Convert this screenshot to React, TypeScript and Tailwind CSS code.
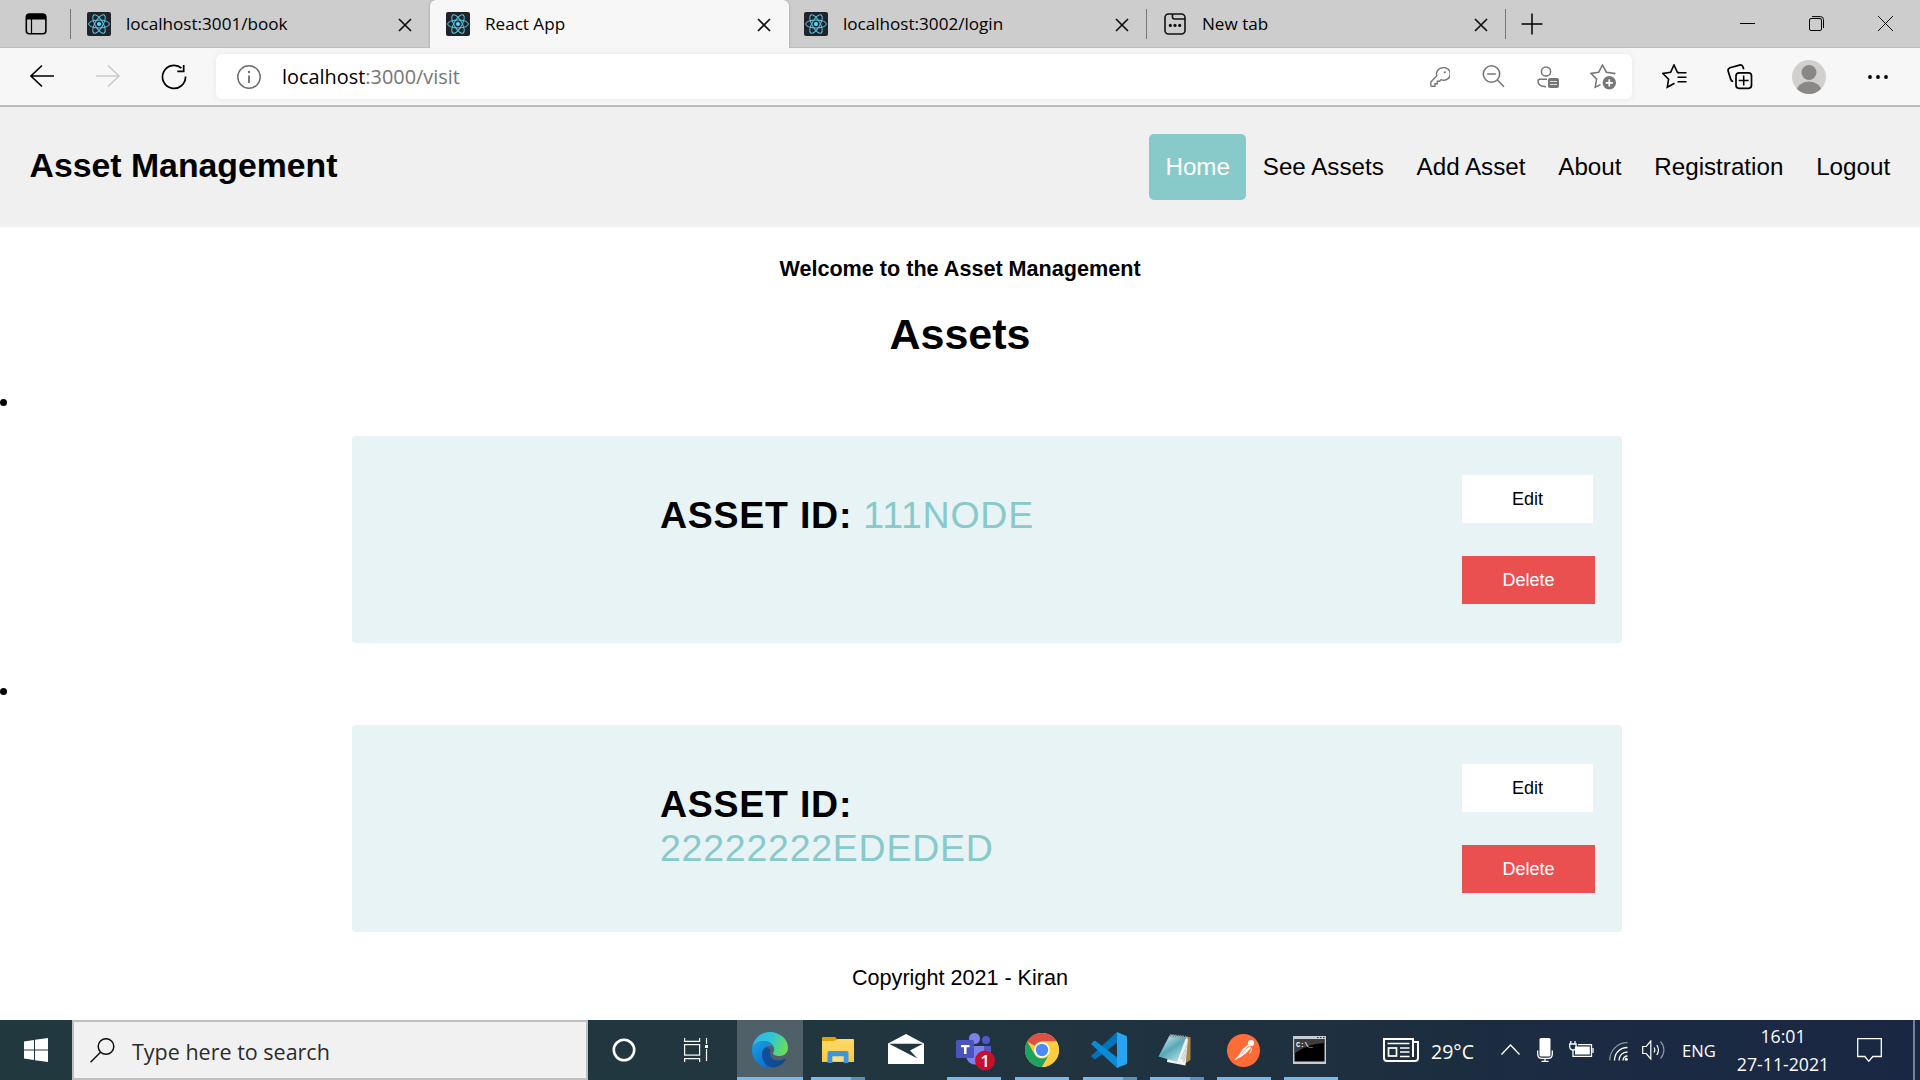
import React from "react";

const ReactLogo = () => (
  <svg width="24" height="24" viewBox="0 0 24 24" className="shrink-0">
    <rect width="24" height="24" rx="2" fill="#20232a" />
    <g fill="none" stroke="#5ccfee" strokeWidth="0.95">
      <ellipse cx="12" cy="12" rx="10.4" ry="4" />
      <ellipse cx="12" cy="12" rx="10.4" ry="4" transform="rotate(60 12 12)" />
      <ellipse cx="12" cy="12" rx="10.4" ry="4" transform="rotate(120 12 12)" />
    </g>
    <circle cx="12" cy="12" r="2" fill="#61dafb" />
  </svg>
);

const CloseX = () => (
  <svg width="14" height="14" viewBox="0 0 14 14" className="mt-[2px] shrink-0" stroke="#111" strokeWidth="1.7">
    <path d="M1 1l12 12M13 1L1 13" />
  </svg>
);

const NewTabIcon = () => (
  <svg width="24" height="24" viewBox="0 0 24 24" className="shrink-0" fill="none" stroke="#111" strokeWidth="1.6">
    <rect x="2" y="2" width="20" height="20" rx="3.5" />
    <path d="M9.5 2v3a2 2 0 0 0 2 2H22" />
    <g fill="#111" stroke="none">
      <circle cx="7.3" cy="13.4" r="1.6" />
      <circle cx="12" cy="13.4" r="1.6" />
      <circle cx="16.7" cy="13.4" r="1.6" />
    </g>
  </svg>
);

function Tab({ icon, title }: { icon: React.ReactNode; title: string }) {
  return (
    <div className="flex h-full w-[358px] items-center pl-4 pr-[17px]">
      {icon}
      <span className="ml-[15px] flex-1 text-[17.1px] leading-6">{title}</span>
      <CloseX />
    </div>
  );
}

const Divider = () => <div className="h-[30px] w-px bg-[#777]" />;

function TabStrip() {
  return (
    <div className="flex h-12 items-center border-b border-[#bdbdbd] bg-[#cdcdcd] text-black">
      <svg width="24" height="24" viewBox="0 0 24 24" className="ml-6 mr-[22px] shrink-0" fill="none" stroke="#000">
        <rect x="2.3" y="2.3" width="19.6" height="19.4" rx="3" strokeWidth="1.6" />
        <path d="M2 5a3 3 0 0 1 3-3.5h14a3 3 0 0 1 3 3.5v2.5H2z" fill="#000" stroke="none" />
        <path d="M7.5 7v15" strokeWidth="1.2" />
      </svg>
      <Divider />
      <Tab icon={<ReactLogo />} title="localhost:3001/book" />
      <div className="ml-px mt-px h-12 w-[359px] rounded-t-md bg-[#f7f7f7] shadow-[0_0_3px_rgba(0,0,0,0.25)] [clip-path:inset(-4px_-4px_0_-4px)]">
        <Tab icon={<ReactLogo />} title="React App" />
      </div>
      <div className="-ml-px flex h-full w-[358px]">
        <Tab icon={<ReactLogo />} title="localhost:3002/login" />
      </div>
      <Divider />
      <Tab icon={<NewTabIcon />} title="New tab" />
      <Divider />
      <svg width="22" height="22" viewBox="0 0 22 22" className="ml-[15px]" stroke="#000" strokeWidth="1.5">
        <path d="M11 0.5v21M0.5 11h21" />
      </svg>
      <div className="ml-auto mr-[27px] flex items-center gap-[54px]">
        <svg width="15" height="15" viewBox="0 0 15 15" stroke="#000"><path d="M0 7.5h15" /></svg>
        <svg width="15" height="15" viewBox="0 0 15 15" fill="none" stroke="#000">
          <rect x="0.5" y="2.5" width="12" height="12" rx="1.5" />
          <path d="M3 0.6h8.5a3 3 0 0 1 3 3V12" />
        </svg>
        <svg width="15" height="15" viewBox="0 0 15 15" stroke="#000"><path d="M0 0l15 15M15 0L0 15" /></svg>
      </div>
    </div>
  );
}

function Toolbar() {
  return (
    <div className="flex h-[59px] items-center border-b-2 border-[#bdbdbd] bg-[#f7f7f7]">
      <svg width="24" height="24" viewBox="0 0 24 24" className="ml-[30px] -mt-px" fill="none" stroke="#000" strokeWidth="1.6">
        <path d="M24 12H1M12 1.5L1 12l11 10.5" />
      </svg>
      <svg width="24" height="24" viewBox="0 0 24 24" className="ml-[42px] -mt-px" fill="none" stroke="#cbcbcb" strokeWidth="1.6">
        <path d="M0 12h23M12 1.5L23 12 12 22.5" />
      </svg>
      <svg width="26" height="26" viewBox="0 0 26 26" className="ml-[41px]" fill="none" stroke="#000" strokeWidth="1.7">
        <path d="M24.5 12.5A11.5 11.5 0 1 1 20.5 4.2" />
        <path d="M22.7 1v6.3h-6.4" />
      </svg>
      <div className="ml-[29px] flex h-[45px] w-[1416px] items-center rounded-md bg-white shadow-[0_0_6px_rgba(0,0,0,0.08)]">
        <svg width="24" height="24" viewBox="0 0 24 24" className="ml-[21px]" fill="none" stroke="#6b6b6b" strokeWidth="1.4">
          <circle cx="12" cy="12" r="11.2" />
          <path d="M12 10.5v7.5" strokeWidth="1.8" />
          <circle cx="12" cy="7" r="1.2" fill="#6b6b6b" stroke="none" />
        </svg>
        <span className="ml-[21px] flex-1 text-[19.9px] leading-7 text-black">
          localhost<span className="text-[#767676]">:3000/visit</span>
        </span>
        <svg width="20" height="20" viewBox="0 0 20 20" className="mr-[32px]" fill="none" stroke="#767676" strokeWidth="1.4">
          <path d="M12.8 0.7a6.3 6.3 0 0 0-6 8.1L0.8 15v3.3c0 .6.4 1 1 1h3.2v-2.6h2.3v-2.4h2.2l1.7-1.7a6.3 6.3 0 1 0 1.6-11.9z" />
          <circle cx="14.8" cy="5.3" r="1.1" fill="#767676" stroke="none" />
        </svg>
        <svg width="23" height="23" viewBox="0 0 23 23" className="mr-[32px]" fill="none" stroke="#767676" strokeWidth="1.6">
          <circle cx="9.5" cy="9" r="8.2" />
          <path d="M5.2 9h8.6M15.4 15l6.6 6.8" />
        </svg>
        <svg width="23" height="23" viewBox="0 0 23 23" className="mr-[30px] mt-0.5" fill="none" stroke="#767676" strokeWidth="1.5">
          <circle cx="9" cy="5.5" r="4.6" />
          <path d="M10 13.2H3a2 2 0 0 0-2 2c0 3 3 5.3 8 5.5" />
          <rect x="11" y="12" width="11" height="10" rx="2" fill="#767676" stroke="none" />
          <path d="M13 15.5h7M13 18.5h7" stroke="#ddd" strokeWidth="1.1" />
        </svg>
        <svg width="27" height="26" viewBox="0 0 27 26" className="mr-[15px]" fill="none" stroke="#767676" strokeWidth="1.5">
          <path d="M24.2 10.5l.5-1.1-8.3-1.2L12.5 1 8.7 8.2.9 9.4l5.7 5.7-1.4 8 5.3-2.5" />
          <circle cx="19.3" cy="18.8" r="6.7" fill="#767676" stroke="none" />
          <path d="M19.3 15.2v7.2M15.7 18.8h7.2" stroke="#fff" strokeWidth="1.7" />
        </svg>
      </div>
      <svg width="25" height="25" viewBox="0 0 25 25" className="ml-[30px]" fill="none" stroke="#000" strokeWidth="1.6">
        <path d="M17 8.6l-1.6-.3L12 1 8.6 8.3.9 9.5l5.7 5.7-1.3 8 7.2-3.9" />
        <path d="M15.5 8.8h9M15.5 13.3h9M15.5 17.8h9" strokeWidth="1.5" />
      </svg>
      <svg width="26" height="26" viewBox="0 0 26 26" className="ml-[40px]" fill="none" stroke="#000" strokeWidth="1.7">
        <path d="M6.2 17.5c-1.7-.3-2.2-1-2.5-2.2L1.2 7.2C.7 5.5 1.5 4.3 3 3.8l9.5-2.7c1.7-.5 3 .3 3.5 2l.7 2.2" />
        <rect x="9" y="8.8" width="15.5" height="15.5" rx="3" />
        <path d="M16.7 11.5v10M11.7 16.5h10" strokeWidth="1.5" />
      </svg>
      <svg width="34" height="34" viewBox="0 0 34 34" className="ml-[39px] mt-px">
        <defs><clipPath id="avatar"><circle cx="17" cy="17" r="17" /></clipPath></defs>
        <g clipPath="url(#avatar)">
          <rect width="34" height="34" fill="#d2d0ce" />
          <circle cx="17" cy="12.5" r="7.5" fill="#8a8886" />
          <ellipse cx="17" cy="31.5" rx="12.5" ry="10" fill="#8a8886" />
        </g>
      </svg>
      <svg width="20" height="6" viewBox="0 0 20 6" className="ml-[42px]">
        <circle cx="2" cy="3" r="1.9" /><circle cx="10" cy="3" r="1.9" /><circle cx="18" cy="3" r="1.9" />
      </svg>
    </div>
  );
}

const links = ["Home", "See Assets", "Add Asset", "About", "Registration", "Logout"];

function SiteHeader() {
  return (
    <header className="flex h-[120px] items-center justify-between bg-[#f0f0f0] pl-[29.5px] pr-[13.5px] text-black">
      <h1 className="-mt-[4px] text-[33.8px] font-bold leading-10">Asset Management</h1>
      <nav className="flex text-[24.2px]">
        {links.map((l, i) => (
          <a key={l} className={i === 0 ? "flex h-[66px] items-center rounded-[5px] bg-[#88c9ca] px-[16.4px] text-white" : "flex h-[66px] items-center rounded-[5px] px-[16.4px]"}>
            {l}
          </a>
        ))}
      </nav>
    </header>
  );
}

function AssetItem({ id }: { id: string }) {
  return (
    <li className="h-[289px]">
      <div className="h-[7px] w-[7px] rounded-full bg-black" />
      <div className="ml-[352px] mt-[30px] flex h-[207px] w-[1270px] justify-between rounded-[4px] bg-[#e7f3f5]">
        <h2 className="ml-[308px] mt-[58.4px] w-[450px] text-[37.5px] font-bold leading-[43.2px] tracking-[0.75px] text-black">
          ASSET ID:{" "}<span className="ml-px font-normal text-[#88c9ca] first:ml-0">{id}</span>
        </h2>
        <div className="mt-[39px] flex w-[160px] flex-col gap-[33px] text-[18px] text-black">
          <button className="h-12 w-[131px] bg-white">Edit</button>
          <button className="h-12 w-[133px] bg-[#eb5050] text-white">Delete</button>
        </div>
      </div>
    </li>
  );
}

function TaskbarApp({ children, narrow, bar }: { children: React.ReactNode; narrow?: boolean; bar?: "full" | "split" | "active" }) {
  return (
    <div className={narrow ? "flex h-[60px] w-[67px] flex-col items-center" : "flex h-[60px] w-[68px] flex-col items-center"}>
      <div className={bar === "active" ? "flex h-[57px] w-[66px] items-center justify-center bg-[#4f6068] pt-[3px]" : "flex h-[57px] w-full items-center justify-center pt-[3px]"}>
        {children}
      </div>
      {bar === "active" && <div className="h-[3px] w-[66px] bg-[#76b9ed]" />}
      {bar === "full" && <div className="h-[3px] w-[54px] bg-[#76b9ed]" />}
      {bar === "split" && (
        <div className="flex h-[3px] w-[54px]">
          <div className="w-10 bg-[#76b9ed]" />
          <div className="flex-1 bg-[#5f8fb8]" />
        </div>
      )}
    </div>
  );
}

const Edge = () => (
  <svg width="36" height="36" viewBox="0 0 36 36">
    <defs>
      <linearGradient id="eTop" x1="0" y1="0.3" x2="1" y2="0.6">
        <stop offset="0" stopColor="#2fb4f0" /><stop offset="0.5" stopColor="#33c6cf" /><stop offset="1" stopColor="#6be04f" />
      </linearGradient>
      <linearGradient id="eLeft" x1="0" y1="0" x2="0.6" y2="1">
        <stop offset="0" stopColor="#1ba0e2" /><stop offset="1" stopColor="#0b6fd0" />
      </linearGradient>
      <linearGradient id="eBot" x1="0" y1="0" x2="1" y2="0.5">
        <stop offset="0" stopColor="#0f4fa8" /><stop offset="1" stopColor="#114a8b" />
      </linearGradient>
    </defs>
    <path d="M0 17C1 7 8.5 0 18 0s18 7 18 15.5c0 5-3.5 8.5-8.5 8.5-4 0-6.5-1.4-6.5-2.7 0-.9 1.2-1.5 1.2-4C22.2 13.5 18 9 11.5 9 5 9 1 13 0 17z" fill="url(#eTop)" />
    <path d="M0 18c0-5.5 5.5-9 11.3-9 6 0 10.2 3.6 10.7 7-1-1.4-2.6-2.2-4.3-2.2-4.5 0-7.7 4-7.7 8.7C10 30 15.5 35.3 22 35.6 20.7 36 19.3 36 18 36 8 36 0 28 0 18z" fill="url(#eLeft)" />
    <path d="M13.8 15.2C11.5 16.7 10 19.3 10 22.5 10 30 16 36 22 35.5c5-.6 9.3-3.7 11.5-7.5.4-.8-.3-1.2-1-.9-1.8.9-4 1.4-6.2 1.4-6 0-8.8-4.5-8.3-8.5 0-.9.2-1.6.5-2.2-1.5-1.3-2.8-2.2-4.7-2.6z" fill="url(#eBot)" />
  </svg>
);

const Explorer = () => (
  <svg width="32" height="28" viewBox="0 0 32 28">
    <defs><linearGradient id="fold" x1="0" y1="0" x2="0" y2="1"><stop offset="0" stopColor="#ffd96a" /><stop offset="1" stopColor="#fcc93f" /></linearGradient></defs>
    <path d="M0 2a1 1 0 0 1 1-1h12l3 3-3 2H0z" fill="#e2a100" />
    <path d="M0 5h12l4-2h15a1 1 0 0 1 1 1v22H0z" fill="url(#fold)" />
    <path d="M5.5 27V17a2 2 0 0 1 2-2h17a2 2 0 0 1 2 2v10h-5v-6.5h-11V27z" fill="#3a97dd" />
    <path d="M10.5 25v-4.5h11V25z" fill="#f9dd8c" />
  </svg>
);

const Mail = () => (
  <svg width="36" height="30" viewBox="0 0 36 30">
    <path d="M0 9.5L18 0l18 9.5V30H0z" fill="#fff" />
    <path d="M1 9.8h34L22 16.5l7.5 8z" fill="#21353f" />
  </svg>
);

const Teams = () => (
  <svg width="40" height="38" viewBox="0 0 40 38" className="overflow-visible">
    <circle cx="18.5" cy="5.5" r="5.5" fill="#7b83eb" />
    <circle cx="30" cy="7" r="4" fill="#5059c9" />
    <path d="M25 13h10v10H25z" fill="#5059c9" />
    <path d="M10 13h18v9a9 9 0 0 1-18 1z" fill="#7b83eb" />
    <rect x="0" y="7" width="18" height="18" rx="1.5" fill="#4b53bc" />
    <path d="M5 12h8.5v2.3h-3V21H8v-6.7H5z" fill="#fff" />
    <circle cx="29" cy="27.5" r="10" fill="#c8102e" />
    <text x="29" y="33.5" fontSize="17" textAnchor="middle" fill="#fff" fontFamily="Open Sans" fontWeight="600">1</text>
  </svg>
);

const Chrome = () => (
  <svg width="34" height="34" viewBox="0 0 34 34">
    <circle cx="17" cy="17" r="17" fill="#ffcd41" />
    <path d="M2.3 8.5A17 17 0 0 1 31.7 8.5H17a8.5 8.5 0 0 0-7.4 4.3z" fill="#dd5144" />
    <path d="M2.3 8.5A17 17 0 0 0 17 34l7.4-12.8A8.5 8.5 0 0 1 9.6 21.2z" fill="#1ca261" />
    <path d="M17 8.5h14.7A17 17 0 0 1 17 34l7.4-12.8a8.5 8.5 0 0 0 0-8.5z" fill="#ffcd41" />
    <circle cx="17" cy="17" r="7.8" fill="#fff" />
    <circle cx="17" cy="17" r="6.2" fill="#4c8bf5" />
  </svg>
);

const VSCode = () => (
  <svg width="36" height="36" viewBox="0 0 36 36">
    <path d="M26 0L0.8 23.2c-.6.6-.6 1.3 0 1.9l1.9 1.7c.5.5 1.2.5 1.8.1L27 10z" fill="#0073b9" />
    <path d="M26 36L0.8 12.8c-.6-.6-.6-1.3 0-1.9l1.9-1.7c.5-.5 1.2-.5 1.8-.1L27 26z" fill="#0a8bd8" />
    <path d="M26 0l9 3.7c.7.3 1 .8 1 1.5v25.6c0 .7-.3 1.2-1 1.5L26 36z" fill="#27a5f2" />
  </svg>
);

const Notepad = () => (
  <svg width="34" height="34" viewBox="0 0 34 34">
    <defs><linearGradient id="np" x1="0" y1="0" x2="0.7" y2="1"><stop offset="0" stopColor="#e5f6f6" /><stop offset="0.55" stopColor="#57a8b6" /><stop offset="1" stopColor="#b5dde0" /></linearGradient></defs>
    <path d="M29 4h3.5v23L26 31z" fill="#a98545" />
    <path d="M13 2l17 2.5-2.5 28L9 29z" fill="#f1f3f3" />
    <path d="M11.5 2.5L28 4.5 19 29 0.5 23.5z" fill="url(#np)" />
    <path d="M12 2.5l18 2" stroke="#8b9294" strokeWidth="3" strokeDasharray="1.5 1" />
    <path d="M29 12l-6 14M28.5 17l-4 10M28 22l-2.5 7" stroke="#b5bbbd" strokeWidth="0.8" />
  </svg>
);

const Postman = () => (
  <svg width="33" height="33" viewBox="0 0 33 33">
    <circle cx="16.5" cy="16.5" r="16.5" fill="#ff6c37" />
    <circle cx="24" cy="9" r="3.1" fill="#fff" />
    <path d="M21 10.5l3.2 3-5.2 5.7-4.5 3.3L7 26.5l5.5-6 3-5.5z" fill="#fff" />
    <path d="M22 12l-7.5 8M20 10.5l-5 4.5" stroke="#ff6c37" strokeWidth="0.7" fill="none" />
    <path d="M23.5 13l1 3-2 3.5" stroke="#fff" strokeWidth="0.9" fill="none" />
  </svg>
);

const Cmd = () => (
  <svg width="33" height="28" viewBox="0 0 33 28">
    <rect width="33" height="28" fill="#c6ccd1" />
    <rect x="1.5" y="3" width="30" height="22.5" fill="#000" />
    <path d="M1.5 3h30v4C18 8 8 12 1.5 18z" fill="#3d3d3d" />
    <path d="M24 1.5h1.5M27 1.5h1.5M30 1.5h1.5" stroke="#333" />
    <text x="3" y="10.5" fontSize="7" fill="#fff" fontFamily="Liberation Mono" fontWeight="700">C:\_</text>
  </svg>
);

function Taskbar() {
  return (
    <div className="flex h-[60px] w-full bg-[linear-gradient(90deg,#21383f_0%,#21363f_45%,#1f303f_68%,#1b2a42_85%,#1a2744_100%)] text-white">
      <div className="flex w-[72px] items-center justify-center">
        <svg width="24" height="24" viewBox="0 0 24 24" fill="#fff">
          <path d="M0 3.4L10 2v9.5H0zM11 1.8L24 0v11.5H11zM0 12.5h10V22L0 20.6zM11 12.5h13V24L11 22.2z" />
        </svg>
      </div>
      <div className="flex w-[516px] items-center border-2 border-[#bfbfbf] bg-[#f1f1f1] text-[#2b2b2b]">
        <svg width="25" height="25" viewBox="0 0 25 25" className="ml-4" fill="none" stroke="#111" strokeWidth="1.5">
          <circle cx="16" cy="8.5" r="7.8" />
          <path d="M10.5 14.2L0.5 24.3" />
        </svg>
        <span className="ml-[17px] mt-1 text-[21.5px] leading-7">Type here to search</span>
      </div>
      <div className="flex w-[72px] items-center justify-center">
        <svg width="24" height="24" viewBox="0 0 24 24" fill="none" stroke="#fff"><circle cx="12" cy="12" r="10.2" strokeWidth="2.6" /></svg>
      </div>
      <div className="flex w-[76px] items-center pl-6">
        <svg width="25" height="24" viewBox="0 0 25 24" fill="none" stroke="#fff" strokeWidth="1.2">
          <path d="M0.6 0v3.4h15V0M0.6 24v-3.4h15V24M22.5 0v6M22.5 11v12" />
          <rect x="0.6" y="6.6" width="15" height="10.5" />
          <rect x="21" y="7" width="3" height="3" fill="#fff" stroke="none" />
        </svg>
      </div>
      <TaskbarApp bar="active"><Edge /></TaskbarApp>
      <TaskbarApp bar="split"><Explorer /></TaskbarApp>
      <TaskbarApp><span className="mb-0.5 flex"><Mail /></span></TaskbarApp>
      <TaskbarApp bar="full"><span className="mt-1 flex pl-1"><Teams /></span></TaskbarApp>
      <TaskbarApp bar="full"><Chrome /></TaskbarApp>
      <TaskbarApp narrow bar="split"><span className="flex pr-px"><VSCode /></span></TaskbarApp>
      <TaskbarApp narrow bar="split"><span className="flex pr-[3px]"><Notepad /></span></TaskbarApp>
      <TaskbarApp narrow bar="full"><span className="flex pr-px"><Postman /></span></TaskbarApp>
      <TaskbarApp narrow bar="full"><span className="mb-px flex pr-0.5"><Cmd /></span></TaskbarApp>
      <div className="flex flex-1 items-center">
        <svg width="36" height="24" viewBox="0 0 36 24" className="ml-[39px]" fill="none" stroke="#fff" strokeWidth="2">
          <path d="M30 4h5v16a3 3 0 0 1-3 3H4a3 3 0 0 1-3-3V1h29v18" />
          <path d="M4.5 5.5h22M17 10h9.5M17 14h9.5M17 18.5h9.5" strokeWidth="1.5" />
          <rect x="5.5" y="10" width="8" height="8" strokeWidth="1.7" />
        </svg>
        <span className="ml-[12px] mt-1 w-[44px] whitespace-nowrap text-[19.5px] leading-6">29°C</span>
        <svg width="19" height="11" viewBox="0 0 19 11" className="ml-[26px] -mt-0.5" fill="none" stroke="#fff" strokeWidth="1.3"><path d="M0.5 10.5l9-9.5 9 9.5" /></svg>
        <svg width="16" height="24" viewBox="0 0 16 24" className="ml-[17px]" fill="none" stroke="#fff" strokeWidth="1.3">
          <rect x="2.5" y="0" width="11" height="18.5" rx="1.5" fill="#fff" stroke="none" />
          <path d="M0.7 12.5v3.5c0 2.5 1.5 4.3 4 4.3h6.6c2.5 0 4-1.8 4-4.3v-3.5M8 20v3M4.5 23.3h7" />
        </svg>
        <svg width="25" height="18" viewBox="0 0 25 18" className="ml-[16px]" fill="none" stroke="#fff" strokeWidth="1.3">
          <path d="M9 3.6h13.5v11.8H4V9.5M1.8 0v3M6 0v3M0.7 3h6.4v2.5c0 2-1.2 3.5-3.2 3.5S0.7 7.5 0.7 5.5z" />
          <rect x="6" y="5.5" width="14.8" height="8" fill="#fff" stroke="none" />
          <path d="M24 7v5" />
        </svg>
        <svg width="19" height="19" viewBox="0 0 19 19" className="ml-[15px] mt-0.5" fill="none" stroke="#fff" strokeWidth="1.3">
          <path d="M0.7 18.5C0.7 8.5 8.5 0.7 18.5 0.7" opacity="0.5" />
          <path d="M5.5 18.5c0-7.5 5.5-13 13-13M10 18.5c0-5 3.5-8.5 8.5-8.5M14 18.5c0-2.7 1.8-4.5 4.5-4.5" />
          <circle cx="17.3" cy="17.3" r="1.5" fill="#fff" stroke="none" />
        </svg>
        <svg width="23" height="20" viewBox="0 0 23 20" className="ml-[14px]" fill="none" stroke="#fff" strokeWidth="1.2">
          <path d="M0.7 6.5h3.5L8.8 1v18l-4.6-5.5H0.7zM12 7.5c1 1.5 1 3.5 0 5M14.8 5c2 3 2 7 0 10" />
          <path d="M18.5 1.5c4.5 5 4.5 12 0 17" opacity="0.5" />
        </svg>
        <span className="ml-[17px] mt-px w-9 text-[16.6px] leading-6">ENG</span>
        <div className="-mt-px ml-[13px] flex w-[104px] flex-col text-center text-[17.7px] leading-7">
          <span>16:01</span>
          <span>27-11-2021</span>
        </div>
        <svg width="25" height="25" viewBox="0 0 25 25" className="ml-[22px]" fill="none" stroke="#fff" strokeWidth="1.3">
          <path d="M0.7 0.7h23.6v17.8h-8.5l-4 4.8-4-4.8H0.7z" />
        </svg>
        <div className="ml-auto mr-[5px] h-full w-[2px] bg-[#76808f]" />
      </div>
    </div>
  );
}

export default function App() {
  return (
    <div className="flex h-[1080px] w-[1920px] flex-col overflow-hidden bg-white font-['Open_Sans',sans-serif]">
      <TabStrip />
      <Toolbar />
      <div className="flex-1 overflow-hidden font-['Liberation_Sans',sans-serif]">
        <SiteHeader />
        <main className="text-black">
          <p className="mt-7 text-center text-[21.6px] font-bold leading-7">Welcome to the Asset Management</p>
          <h2 className="mt-[26px] text-center text-[43px] font-bold leading-[50px]">Assets</h2>
          <ul className="mt-10">
            <AssetItem id="111NODE" />
            <AssetItem id="22222222EDEDED" />
          </ul>
          <p className="-mt-[13px] text-center text-[21.6px] leading-7">Copyright 2021 - Kiran</p>
        </main>
      </div>
      <Taskbar />
    </div>
  );
}
